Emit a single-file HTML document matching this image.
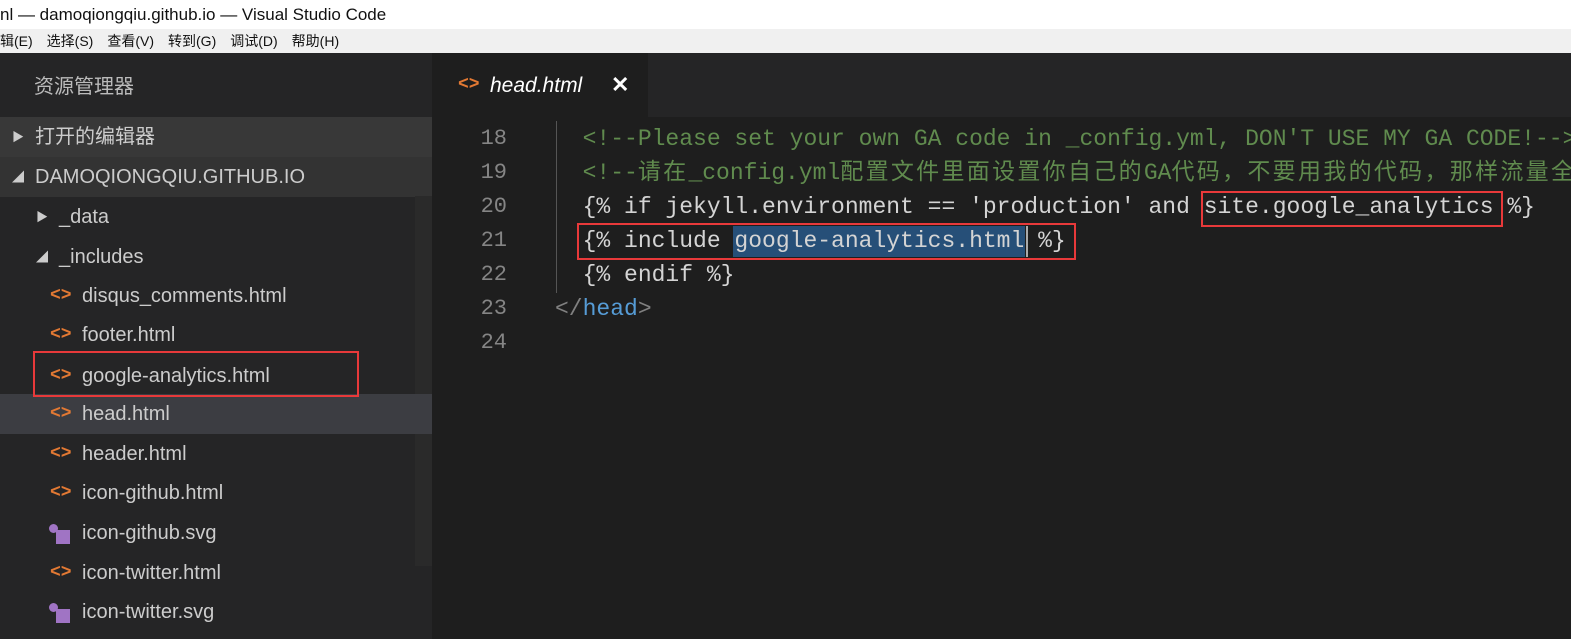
<!DOCTYPE html>
<html><head><meta charset="utf-8"><style>
*{margin:0;padding:0;box-sizing:border-box}
body{width:1571px;height:639px;overflow:hidden;background:#1e1e1e;font-family:"Liberation Sans","Noto Sans CJK SC",sans-serif;position:relative}
.abs{position:absolute;white-space:nowrap}
#title{left:0;top:0;width:1571px;height:29px;background:#fff;color:#111;font-size:17px;line-height:29px;padding-left:0}
#menu{left:0;top:29px;width:1571px;height:24px;background:#f0f0f0;color:#111;font-size:14px;line-height:24px}
#menu span{margin-right:14px}
#side{left:0;top:53px;width:432px;height:586px;background:#252526}
.row{position:absolute;left:0;width:432px;height:40px;line-height:40px;color:#ccc;font-size:20px}
.ic{position:absolute;color:#e37933;font-size:18px;font-weight:bold;font-family:"Liberation Mono",monospace}
.code{font-family:"Liberation Mono","Noto Sans CJK SC",monospace;font-size:23px;color:#d4d4d4;position:absolute;left:555px;white-space:pre;line-height:34px}
.ln{position:absolute;left:440px;width:67px;text-align:right;font-family:"Liberation Mono",monospace;font-size:22px;color:#858585;line-height:34px}
.cm{color:#608b4e}
.cj{letter-spacing:2.3px}
.box{position:absolute;border:2px solid #e8393a}
</style></head><body>
<div class="abs" id="title">nl — damoqiongqiu.github.io — Visual Studio Code</div>
<div class="abs" id="menu"><span>辑(E)</span><span>选择(S)</span><span>查看(V)</span><span>转到(G)</span><span>调试(D)</span><span>帮助(H)</span></div>
<div class="abs" id="side"></div>
<div class="abs" style="left:34px;top:70px;color:#bbb;font-size:20px">资源管理器</div>
<div class="row" style="top:117px;background:#383838"><span style="position:absolute;left:12px;font-size:12px">▶</span><span style="position:absolute;left:35px">打开的编辑器</span></div>
<div class="row" style="top:157px;background:#333"><span style="position:absolute;left:12px;font-size:12px">◢</span><span style="position:absolute;left:35px">DAMOQIONGQIU.GITHUB.IO</span></div>
<div class="abs" style="left:415px;top:196px;width:17px;height:370px;background:#2a2a2a"></div>
<div class="row" style="top:197px"><span style="position:absolute;left:36px;font-size:12px">▶</span><span style="position:absolute;left:59px">_data</span></div>
<div class="row" style="top:237px"><span style="position:absolute;left:36px;font-size:12px">◢</span><span style="position:absolute;left:59px">_includes</span></div>
<div class="row" style="top:276px"><span class="ic" style="left:50px">&lt;&gt;</span><span style="position:absolute;left:82px">disqus_comments.html</span></div>
<div class="row" style="top:315px"><span class="ic" style="left:50px">&lt;&gt;</span><span style="position:absolute;left:82px">footer.html</span></div>
<div class="row" style="top:356px"><span class="ic" style="left:50px">&lt;&gt;</span><span style="position:absolute;left:82px">google-analytics.html</span></div>
<div class="row" style="top:394px;background:#3c3d42"><span class="ic" style="left:50px">&lt;&gt;</span><span style="position:absolute;left:82px">head.html</span></div>
<div class="row" style="top:434px"><span class="ic" style="left:50px">&lt;&gt;</span><span style="position:absolute;left:82px">header.html</span></div>
<div class="row" style="top:473px"><span class="ic" style="left:50px">&lt;&gt;</span><span style="position:absolute;left:82px">icon-github.html</span></div>
<div class="row" style="top:513px"><span style="position:absolute;left:49px;top:11px;width:9px;height:9px;border-radius:50%;background:#a074c4"></span><span style="position:absolute;left:56px;top:17px;width:14px;height:14px;background:#a074c4"></span><span style="position:absolute;left:82px">icon-github.svg</span></div>
<div class="row" style="top:553px"><span class="ic" style="left:50px">&lt;&gt;</span><span style="position:absolute;left:82px">icon-twitter.html</span></div>
<div class="row" style="top:592px"><span style="position:absolute;left:49px;top:11px;width:9px;height:9px;border-radius:50%;background:#a074c4"></span><span style="position:absolute;left:56px;top:17px;width:14px;height:14px;background:#a074c4"></span><span style="position:absolute;left:82px">icon-twitter.svg</span></div>
<div class="box" style="left:33px;top:351px;width:326px;height:46px"></div>

<div class="abs" style="left:432px;top:53px;width:1139px;height:64px;background:#252526"></div>
<div class="abs" style="left:432px;top:53px;width:216px;height:64px;background:#1e1e1e"></div>
<div class="abs ic" style="left:458px;top:75px">&lt;&gt;</div>
<div class="abs" style="left:490px;top:74px;color:#fff;font-size:21px;font-style:italic">head.html</div>
<div class="abs" style="left:611px;top:72px;color:#fff;font-size:22px;font-weight:bold">✕</div>

<div class="abs" style="left:556px;top:121px;width:1px;height:172px;background:#555"></div>
<div class="ln" style="top:122px">18</div>
<div class="ln" style="top:156px">19</div>
<div class="ln" style="top:190px">20</div>
<div class="ln" style="top:224px">21</div>
<div class="ln" style="top:258px">22</div>
<div class="ln" style="top:292px">23</div>
<div class="ln" style="top:326px">24</div>
<div class="abs" style="left:733px;top:226px;width:292px;height:31px;background:#264f78"></div>
<div class="abs" style="left:1026px;top:226px;width:2px;height:31px;background:#aaa"></div>
<div class="code cm" style="top:122px">  &lt;!--Please set your own GA code in _config.yml, DON'T USE MY GA CODE!--&gt;</div>
<div class="code cm" style="top:156px">  &lt;!--<span class="cj">请在</span>_config.yml<span class="cj">配置文件里面设置你自己的</span>GA<span class="cj">代码，不要用我的代码，那样流量全</span></div>
<div class="code" style="top:190px">  {% if jekyll.environment == 'production' and site.google_analytics %}</div>
<div class="code" style="top:224px">  {% include google-analytics.html %}</div>
<div class="code" style="top:258px">  {% endif %}</div>
<div class="code" style="top:292px"><span style="color:#808080">&lt;/</span><span style="color:#569cd6">head</span><span style="color:#808080">&gt;</span></div>
<div class="box" style="left:1201px;top:191px;width:302px;height:36px"></div>
<div class="box" style="left:577px;top:223px;width:499px;height:37px"></div>
</body></html>
